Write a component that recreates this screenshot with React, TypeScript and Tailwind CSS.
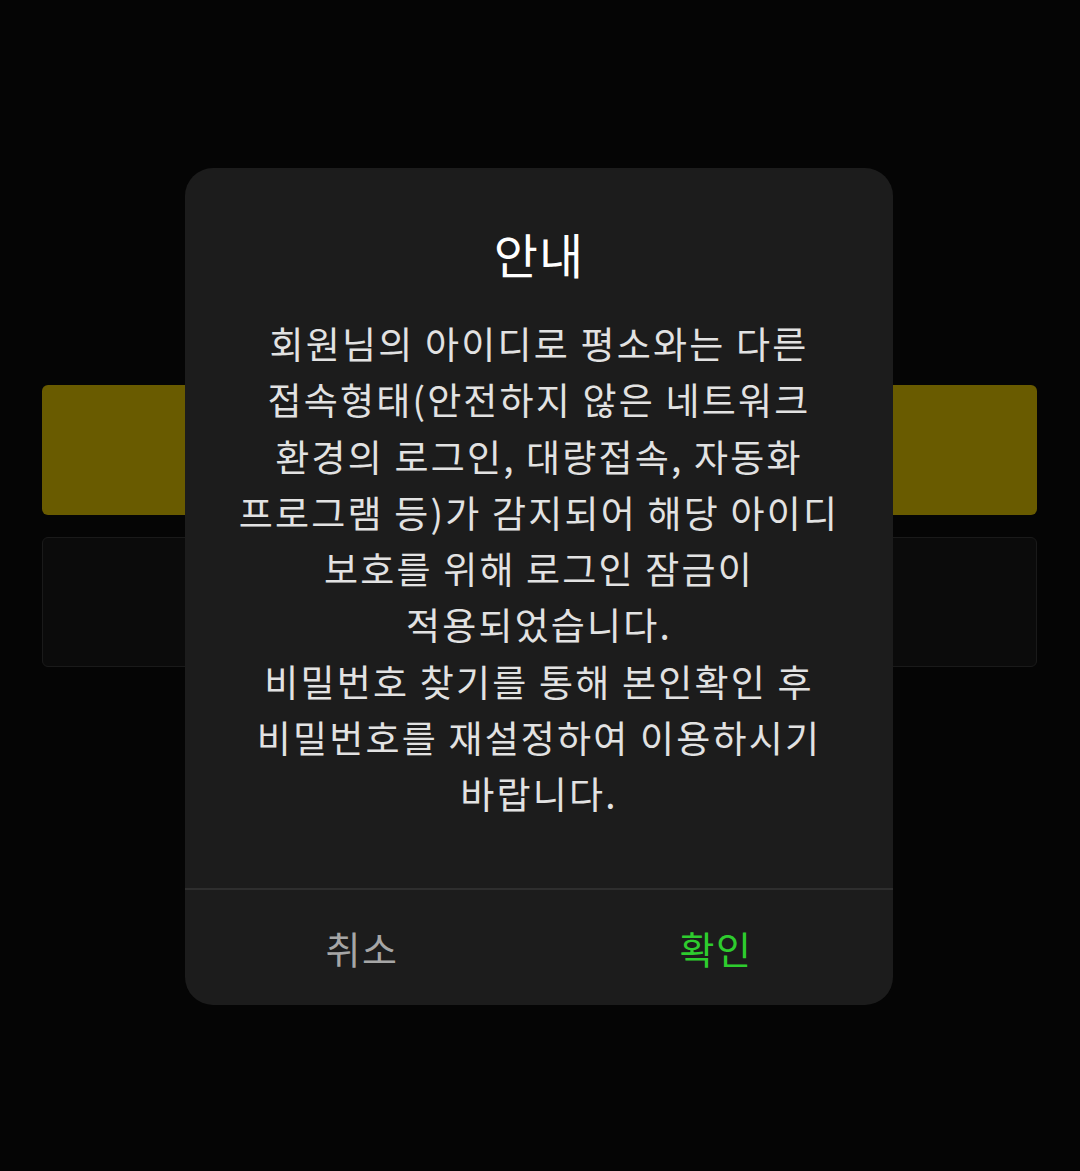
const lines = [
  '회원님의 아이디로 평소와는 다른',
  '접속형태(안전하지 않은 네트워크',
  '환경의 로그인, 대량접속, 자동화',
  '프로그램 등)가 감지되어 해당 아이디',
  '보호를 위해 로그인 잠금이',
  '적용되었습니다.',
  '비밀번호 찾기를 통해 본인확인 후',
  '비밀번호를 재설정하여 이용하시기',
  '바랍니다.',
];

export default function App() {
  return (
    <div
      className="relative h-[1171px] w-[1080px] overflow-hidden bg-[#050505]"
      style={{ fontFamily: '"Noto Sans CJK KR", "Noto Sans", sans-serif' }}
    >
      {/* page behind the dialog */}
      <div className="flex flex-col gap-[22px] px-[42px] pt-[385px] pr-[43px]">
        <div className="h-[130px] rounded-[6px] bg-[#695b00]" />
        <div className="h-[130px] rounded-[6px] border border-[#1a1a1a] bg-[#0b0b0b]" />
      </div>

      {/* dialog */}
      <div className="absolute left-[185px] top-[168px] flex w-[708px] flex-col rounded-[28px] bg-[#1c1c1c]">
        <div className="px-[30px] pb-[66px] pt-[55px] text-center">
          <h2 className="text-[48px] leading-[60px] tracking-[1px] text-white">안내</h2>
          <p className="mt-[32px] text-[37px] leading-[56.3px] tracking-[2.2px] text-[#e2e2e2]">
            {lines.map((l, i) => (
              <span key={i} className="block">
                {l}
              </span>
            ))}
          </p>
        </div>
        <div className="h-[2px] bg-[#2e2e2e]" />
        <div className="flex h-[115px]">
          <button className="flex-1 text-[38px] tracking-[1.5px] text-[#a6a6a6]">취소</button>
          <button className="flex-1 text-[38px] tracking-[1.5px] text-[#2ecc2e]">확인</button>
        </div>
      </div>
    </div>
  );
}
